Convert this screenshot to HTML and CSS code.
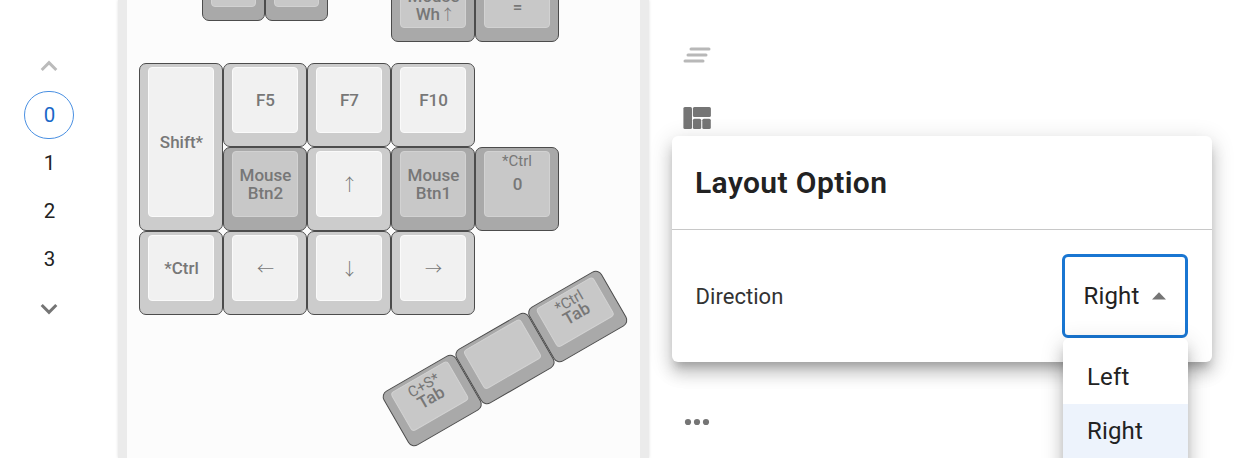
FILE: index.html
```html
<!DOCTYPE html>
<html lang="en">
<head>
<meta charset="utf-8">
<title>Keymap editor</title>
<link rel="stylesheet" href="styles.css">
</head>
<body>
<div class="app">
  <nav class="layers">
    <svg class="chevron up" width="18" height="12" viewBox="0 0 18 12"><path d="M1.7 10 9 2.7 16.3 10"/></svg>
    <div class="layer active">0</div>
    <div class="layer">1</div>
    <div class="layer">2</div>
    <div class="layer">3</div>
    <svg class="chevron down" width="18" height="12" viewBox="0 0 18 12"><path d="M1.7 2 9 9.3 16.3 2"/></svg>
  </nav>
  <main class="board">
    <div class="cluster upper-a">
      <div class="key dark"><div class="cap"></div></div>
      <div class="key dark"><div class="cap"></div></div>
    </div>
    <div class="cluster upper-b">
      <div class="key dark"><div class="cap"><div>Mouse<br>Wh <span class="arrow inline">↑</span></div></div></div>
      <div class="key dark"><div class="cap equals">=</div></div>
    </div>
    <div class="cluster grid">
      <div class="key tall"><div class="cap">Shift*</div></div>
      <div class="key"><div class="cap">F5</div></div>
      <div class="key"><div class="cap">F7</div></div>
      <div class="key"><div class="cap">F10</div></div>
      <div class="key dark second"><div class="cap">Mouse<br>Btn2</div></div>
      <div class="key"><div class="cap arrow">↑</div></div>
      <div class="key dark"><div class="cap">Mouse<br>Btn1</div></div>
      <div class="key dark"><div class="cap"><span class="hold">*Ctrl</span>0</div></div>
      <div class="key"><div class="cap">*Ctrl</div></div>
      <div class="key"><div class="cap arrow">←</div></div>
      <div class="key"><div class="cap arrow">↓</div></div>
      <div class="key"><div class="cap arrow">→</div></div>
    </div>
    <div class="cluster thumb">
      <div class="key dark"><div class="cap"><span class="hold">C+S*</span>Tab</div></div>
      <div class="key dark"><div class="cap"></div></div>
      <div class="key dark"><div class="cap"><span class="hold">*Ctrl</span>Tab</div></div>
    </div>
  </main>
  <aside class="tools">
    <svg class="icon faint" width="28" height="16" viewBox="0 0 28 16"><path d="M8 2h18M5 8h18M2 14h18"/></svg>
    <svg class="icon quilt" width="28" height="22" viewBox="0 0 28 22"><rect x="0.4" y="0" width="8.600" height="22" rx="1.5"/><rect x="9.9" y="0" width="18" height="10" rx="1.5"/><rect x="9.9" y="11.7" width="8.3" height="10.3" rx="1.5"/><rect x="19.3" y="11.7" width="8.5" height="10.3" rx="1.5"/></svg>
    <section class="card">
      <h2 class="card-title">Layout Option</h2>
      <div class="option">
        <span class="option-label">Direction</span>
        <div class="select">
          <span>Right</span>
          <svg width="14" height="8" viewBox="0 0 14 8"><path d="M0 7.5 7 .3l7 7.200z"/></svg>
          <div class="menu">
            <div class="item">Left</div>
            <div class="item selected">Right</div>
          </div>
        </div>
      </div>
    </section>
    <svg class="icon dots" width="26" height="8" viewBox="0 0 26 8"><circle cx="4" cy="4" r="3.1"/><circle cx="13" cy="4" r="3.1"/><circle cx="22" cy="4" r="3.1"/></svg>
  </aside>
</div>
</body>
</html>
```

FILE: styles.css
```css
* { box-sizing: border-box; }
body { margin: 0; background: #fff; font-family: Roboto, sans-serif; color: #222; }
.app { display: flex; width: 1245px; height: 458px; overflow: hidden; }

.layers { width: 118px; flex: none; padding: 60px 0 0 24px; font-size: 20.5px; }
.layers .chevron { display: block; margin-left: 16px; fill: none; stroke-width: 3; }
.chevron.up { stroke: #bbb; margin-bottom: 19px; }
.chevron.down { stroke: #757575; margin-top: 20px; }
.layer { width: 50px; height: 48px; padding-left: 1px; display: flex; align-items: center; justify-content: center; }
.layer.active { border: 1px solid #4a90e2; border-radius: 24px; color: #1967c8; }

.board { position: relative; width: 531px; flex: none; background: #fcfcfc; border: solid #ebebeb; border-width: 0 9px; box-shadow: 0 0 3px rgba(0,0,0,.13); }
.cluster { position: absolute; display: grid; grid-auto-flow: column; }
.upper-a { left: 75px; top: -63px; grid-auto-columns: 63px; grid-auto-rows: 84px; }
.upper-b { left: 264px; top: -42px; grid-auto-columns: 84px; grid-auto-rows: 84px; }
.cluster.grid { left: 12px; top: 63px; grid-auto-flow: row; grid-template-columns: repeat(5, 84px); grid-auto-rows: 84px; }
.tall { grid-row: span 2; }
.second { grid-column: 2; }
.thumb { left: 252.400px; top: 326.900px; grid-auto-columns: 84px; grid-auto-rows: 63px; transform: rotate(-30deg); }

.key { display: flex; padding: 3px 8px 13px; border: 1px solid #4c4c4c; border-radius: 7px; background: #ccc; }
.cap { position: relative; flex: 1; display: flex; align-items: center; justify-content: center; padding-left: 1px; text-align: center; border: 1px solid #fafafa; border-radius: 4px; background: #f1f1f1; color: #777; font-size: 17px; font-weight: 500; line-height: 18px; }
.key.dark { background: #a9a9a9; }
.dark .cap { background: #c8c8c8; border-color: #d2d2d2; }
.hold { position: absolute; top: 0; left: 0; right: 0; font-size: 15px; font-weight: 400; }
.thumb .cap { padding-top: 3px; }
.upper-b .cap { padding-top: 19px; }
.upper-b .cap.equals { padding-top: 24px; }
.arrow { font-family: "Noto Sans CJK JP", sans-serif; font-weight: 300; }
.cap.arrow { font-size: 17px; }
.inline { margin: 0 -4px; font-size: 15px; line-height: 1; }

.tools { flex: 1; padding: 47px 0 0 23px; display: flex; flex-direction: column; align-items: flex-start; min-width: 0; background: #fff; }
.icon { margin-left: 11px; fill: #757575; flex: none; }
.faint { stroke: #b8b8b8; stroke-width: 3; stroke-linecap: round; }
.quilt { margin-top: 44px; }
.dots { margin-top: 56px; margin-left: 12px; }
.card { position: relative; width: 540px; height: 226px; flex: none; margin-top: 7px; background: #fff; border-radius: 6px; box-shadow: 0 8px 8px -4px rgba(0,0,0,.2), 0 12px 15px 1px rgba(0,0,0,.14), 0 5px 21px 3px rgba(0,0,0,.12); }
.card-title { margin: 0; height: 94px; padding: 0 23px; display: flex; align-items: center; border-bottom: 1px solid #c8c8c8; font-size: 30px; font-weight: 600; letter-spacing: .4px; }
.option { display: flex; justify-content: space-between; align-items: center; padding: 24px 24px 0 23.5px; }
.option-label { font-size: 22px; letter-spacing: .05px; color: #333; }
.select { position: relative; width: 126px; height: 84px; display: flex; align-items: center; padding-left: 18.500px; border: 3px solid #1976d2; border-radius: 6px; font-size: 24px; letter-spacing: .15px; }
.select > svg { margin-left: 12.500px; fill: #757575; }
.menu { position: absolute; top: 81px; left: -2px; width: 125px; height: 150px; padding-top: 12px; background: #fff; border-radius: 6px; box-shadow: 0 8px 8px -4px rgba(0,0,0,.2), 0 12px 15px 1px rgba(0,0,0,.14), 0 5px 21px 3px rgba(0,0,0,.12); }
.item { height: 54px; display: flex; align-items: center; padding-left: 24px; }
.selected { background: #edf3fc; }
```
